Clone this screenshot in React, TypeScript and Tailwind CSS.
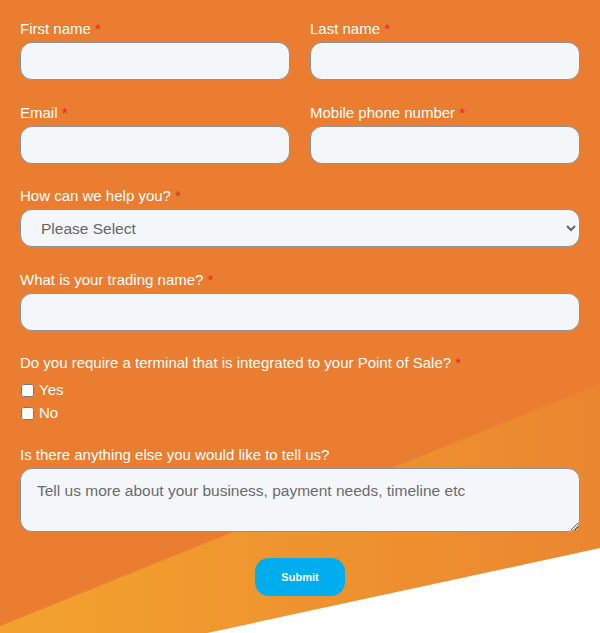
import type { ReactNode } from 'react'

const FONT = { fontFamily: '"Liberation Sans", Arial, sans-serif' }

function Label({ children, required }: { children: ReactNode; required?: boolean }) {
  return (
    <label className="mb-1 block text-[15px] leading-[18px] text-white">
      {children}
      {required && <span className="text-[#e3262b]"> *</span>}
    </label>
  )
}

function TextInput() {
  return (
    <input
      type="text"
      className="block h-[38px] w-full rounded-[12px] border border-[#8d939b] bg-[#f4f7fa] px-4 text-[15.5px] text-[#333] outline-none"
    />
  )
}

function Field({ label, required, children }: { label: string; required?: boolean; children: ReactNode }) {
  return (
    <div className="mb-[23.5px]">
      <Label required={required}>{label}</Label>
      {children}
    </div>
  )
}

function Background() {
  return (
    <svg className="absolute inset-0 h-full w-full" viewBox="0 0 600 633" preserveAspectRatio="none">
      <defs>
        <linearGradient id="band" x1="0" y1="0" x2="1" y2="0">
          <stop offset="0" stopColor="#f2a22e" />
          <stop offset="1" stopColor="#eb8630" />
        </linearGradient>
      </defs>
      <polygon points="0,626 600,384 600,548 207,633 0,633" fill="url(#band)" />
      <polygon points="600,548 600,633 207,633" fill="#ffffff" />
    </svg>
  )
}

export default function App() {
  return (
    <div className="relative h-[633px] w-full overflow-hidden bg-[#ea7d2f]" style={FONT}>
      <Background />
      <form className="relative px-5 pt-5" onSubmit={(e) => e.preventDefault()}>
        <div className="grid grid-cols-2 gap-x-5">
          <Field label="First name" required>
            <TextInput />
          </Field>
          <Field label="Last name" required>
            <TextInput />
          </Field>
          <Field label="Email" required>
            <TextInput />
          </Field>
          <Field label="Mobile phone number" required>
            <TextInput />
          </Field>
        </div>

        <Field label="How can we help you?" required>
          <select
            defaultValue=""
            className="block h-[38px] w-full rounded-[12px] border border-[#8d939b] bg-[#f4f7fa] pl-4 pr-2 text-[15.5px] text-[#666] outline-none"
          >
            <option value="">Please Select</option>
            <option>New terminal</option>
            <option>Online payments</option>
            <option>Something else</option>
          </select>
        </Field>

        <Field label="What is your trading name?" required>
          <TextInput />
        </Field>

        <div className="mb-6">
          <Label required>Do you require a terminal that is integrated to your Point of Sale?</Label>
          <div className="mt-[9px] flex flex-col gap-[5px]">
            {['Yes', 'No'].map((opt) => (
              <label key={opt} className="flex items-center gap-[5px] text-[15px] leading-[18px] text-white">
                <input type="checkbox" className="ml-[1px] h-[13px] w-[13px]" />
                {opt}
              </label>
            ))}
          </div>
        </div>

        <div>
          <Label>Is there anything else you would like to tell us?</Label>
          <textarea
            placeholder="Tell us more about your business, payment needs, timeline etc"
            className="block h-[64px] w-full rounded-[12px] border border-[#8d939b] bg-[#f4f7fa] px-4 pt-[10px] text-[15.5px] text-[#333] outline-none placeholder:text-[#6b6b6b]"
          />
        </div>

        <div className="mt-[26px] flex justify-center">
          <button
            type="submit"
            className="h-[38px] w-[90px] rounded-[14px] bg-[#00aeef] text-[11px] font-bold text-white"
          >
            Submit
          </button>
        </div>
      </form>
    </div>
  )
}
